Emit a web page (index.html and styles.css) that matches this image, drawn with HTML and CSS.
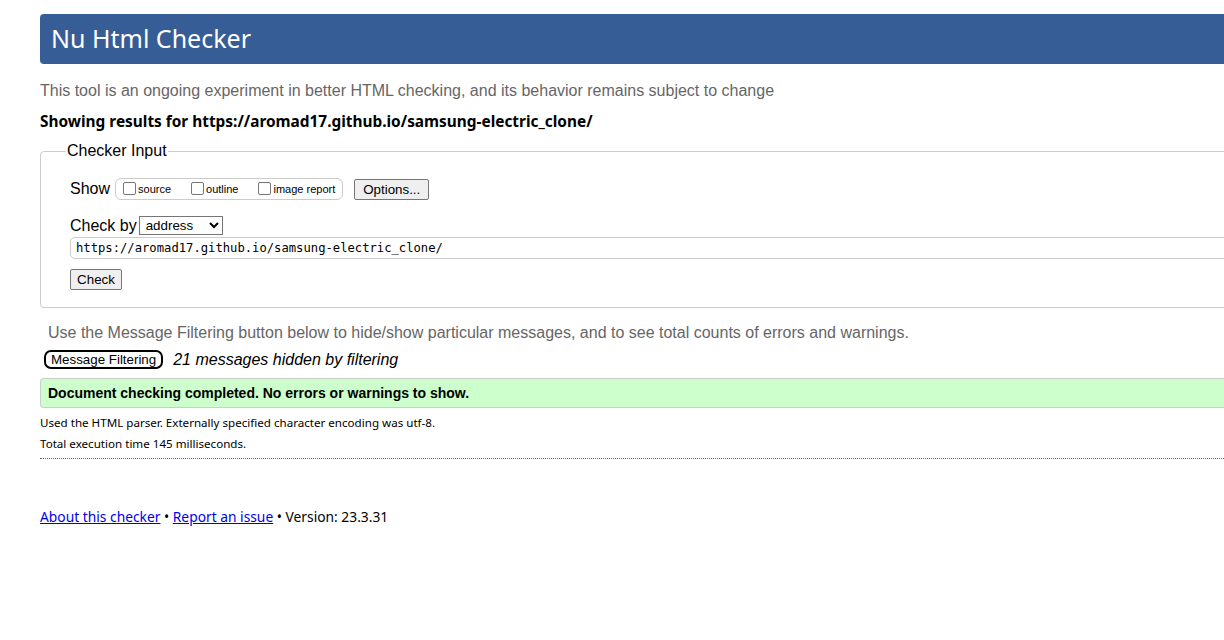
FILE: index.html
```html
<!DOCTYPE html>
<html lang="en">
<head>
<meta charset="utf-8">
<title>Nu Html Checker</title>
<link rel="stylesheet" href="styles.css">
</head>
<body>
<div class="page">
  <h1 class="title">Nu Html Checker</h1>
  <p class="lead">This tool is an ongoing experiment in better HTML checking, and its behavior remains subject to change</p>
  <p class="showing">Showing results for https://aromad17.github.io/samsung-electric_clone/</p>
  <fieldset class="checker">
    <legend class="legend">Checker Input</legend>
    <div class="row show-row">
      <span class="lbl lbl-show">Show</span>
      <span class="opts">
        <label class="opt"><input class="cb" type="checkbox">source</label>
        <label class="opt"><input class="cb" type="checkbox">outline</label>
        <label class="opt"><input class="cb" type="checkbox">image report</label>
      </span>
      <button class="btn btn-options" type="button">Options...</button>
    </div>
    <div class="row by-row">
      <span class="lbl lbl-by">Check by</span>
      <select class="sel"><option>address</option></select>
    </div>
    <input class="url" type="url" value="https://aromad17.github.io/samsung-electric_clone/">
    <button class="btn btn-check" type="button">Check</button>
  </fieldset>
  <p class="note">Use the Message Filtering button below to hide/show particular messages, and to see total counts of errors and warnings.</p>
  <div class="filter-row">
    <button class="btn-filter" type="button">Message Filtering</button>
    <span class="hidden-count">21 messages hidden by filtering</span>
  </div>
  <div class="success">Document checking completed. No errors or warnings to show.</div>
  <p class="details">Used the HTML parser. Externally specified character encoding was utf-8.</p>
  <p class="details">Total execution time 145 milliseconds.</p>
  <hr class="sep">
  <p class="footer"><a href="#">About this checker</a> • <a href="#">Report an issue</a> • Version: 23.3.31</p>
</div>
</body>
</html>
```
FILE: styles.css
```css
html {
  overflow: hidden;
}

body {
  margin: 0;
  background: #fff;
  color: #000;
  font-family: "Liberation Sans", Arial, sans-serif;
  font-size: 16px;
}

.page {
  width: 1320px;
  margin-left: 40px;
  padding-top: 14px;
}

.title {
  margin: 0;
  height: 50px;
  box-sizing: border-box;
  padding: 0 0 2px 11px;
  display: flex;
  align-items: center;
  background: #365d95;
  color: #fff;
  font-family: "Noto Sans", sans-serif;
  font-weight: normal;
  font-size: 25px;
  border-radius: 4px 0 0 4px;
}

.lead {
  margin: 18px 0 0;
  line-height: 18px;
  color: #666;
}

.showing {
  margin: 12px 0 0;
  line-height: 20px;
  font-family: "Noto Sans", sans-serif;
  font-weight: bold;
  font-size: 15.4px;
}

.checker {
  margin: 10px 0 0;
  padding: 18px 0 17px 29px;
  border: 1px solid #ccc;
  border-radius: 4px 0 0 4px;
  min-inline-size: 0;
}

.legend {
  margin-left: -4px;
  padding: 0 1px;
  line-height: 18px;
  font-size: 16px;
}

.row {
  display: flex;
  align-items: center;
}

.show-row {
  height: 22px;
}

.lbl {
  line-height: 18px;
}

.lbl-show {
  margin-right: 5px;
}

.lbl-by {
  margin-right: 2px;
}

.opts {
  display: inline-flex;
  align-items: center;
  height: 22px;
  box-sizing: border-box;
  border: 1px solid #ccc;
  border-radius: 6px;
  padding: 0 7px 0 3px;
}

.opt {
  display: inline-flex;
  align-items: center;
  font-size: 11px;
  line-height: 13px;
  margin-right: 16px;
}

.opt:last-child {
  margin-right: 0;
}

.cb {
  appearance: none;
  width: 13px;
  height: 13px;
  margin: 0 2px 2px 4px;
  box-sizing: border-box;
  border: 1px solid #767676;
  border-radius: 2px;
  background: #fff;
}

.btn {
  box-sizing: border-box;
  padding: 0;
  height: 21px;
  border: 1px solid #767676;
  border-radius: 2px;
  background: #efefef;
  color: #000;
  font-family: "Liberation Sans", Arial, sans-serif;
  font-size: 13.33px;
}

.btn-options {
  width: 75px;
  margin-left: 11px;
}

.by-row {
  margin-top: 16px;
  height: 19px;
}

.sel {
  width: 84px;
  height: 19px;
  box-sizing: border-box;
  border: 1px solid #767676;
  border-radius: 0;
  background: #fff;
  color: #000;
  font-family: "Liberation Sans", Arial, sans-serif;
  font-size: 13.33px;
  padding: 0 0 0 2px;
}

.url {
  display: block;
  margin: 2px 0 0;
  width: 100%;
  height: 22px;
  box-sizing: border-box;
  border: 1px solid #ccc;
  border-radius: 5px;
  padding: 0 0 0 5px;
  font-family: "DejaVu Sans Mono", monospace;
  font-size: 12.2px;
  color: #000;
  background: #fff;
}

.btn-check {
  display: block;
  width: 52px;
  margin-top: 10px;
}

.note {
  margin: 16px 0 0;
  padding-left: 8px;
  line-height: 18px;
  color: #666;
}

.filter-row {
  display: flex;
  align-items: center;
  height: 19px;
  margin-top: 8px;
}

.btn-filter {
  box-sizing: border-box;
  height: 19px;
  margin-left: 4px;
  padding: 0 5px;
  border: 2px solid #000;
  border-radius: 7px;
  background: #fff;
  color: #000;
  font-family: "Liberation Sans", Arial, sans-serif;
  font-size: 13.33px;
  line-height: 15px;
}

.hidden-count {
  margin-left: 10px;
  font-style: italic;
  line-height: 18px;
}

.success {
  margin-top: 9px;
  height: 30px;
  box-sizing: border-box;
  border: 1px solid #ccc;
  border-right: 0;
  border-radius: 4px 0 0 4px;
  background: #ccffcc;
  padding-left: 7px;
  line-height: 28px;
  font-weight: bold;
  font-size: 14px;
}

.success + .details {
  margin-top: 4px;
}

.details {
  margin: 0;
  line-height: 21px;
  font-family: "Noto Sans", sans-serif;
  font-size: 11.6px;
}

.sep {
  margin: 4px 0 0;
  height: 0;
  border: 0;
  border-top: 1px dotted #666;
}

.footer {
  margin: 48px 0 0;
  line-height: 20px;
  font-family: "Noto Sans", sans-serif;
  font-size: 13.8px;
}

.footer a {
  color: #0000ee;
}
```
